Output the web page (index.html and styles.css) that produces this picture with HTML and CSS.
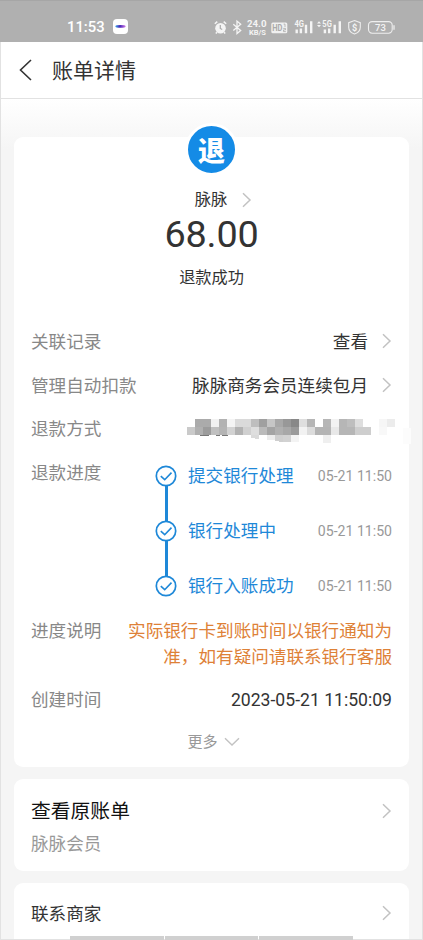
FILE: index.html
```
<!DOCTYPE html>
<html lang="zh-CN">
<head>
  <meta charset="UTF-8">
  <meta name="viewport" content="width=device-width, initial-scale=1.0">
  <title>账单详情</title>
  <link rel="stylesheet" href="styles.css">
</head>
<body>
  <svg class="defs" width="0" height="0">
    <symbol id="chevron" viewBox="0 0 10 16"><path d="M1 1.2 8 8 1 14.8" fill="none" stroke="#c2c2c2" stroke-width="1.5"/></symbol>
    <symbol id="check" viewBox="0 0 22 22">
      <circle cx="11" cy="11" r="9.7" fill="#fff" stroke="#1e88d8" stroke-width="1.7"/>
      <path d="M5.8 11.2 9.7 14.7 16.5 7.6" fill="none" stroke="#1e88d8" stroke-width="1.6"/>
    </symbol>
  </svg>

  <div class="status-bar">
    <span class="clock">11:53</span>
    <svg class="app-icon" width="15" height="15" viewBox="0 0 15 15">
      <defs><linearGradient id="lens"><stop offset="0" stop-color="#35a5e8"/><stop offset=".45" stop-color="#4a25b8"/><stop offset="1" stop-color="#d07ae8"/></linearGradient></defs>
      <rect width="15" height="15" rx="4" fill="#fff"/>
      <ellipse cx="7.5" cy="7.4" rx="5.2" ry="1.4" fill="url(#lens)"/>
    </svg>
    <svg class="status-icons" width="184" height="20" viewBox="0 0 184 20">
      <!-- alarm -->
      <circle cx="6.5" cy="10.2" r="5.3" fill="#f4f4f4"/>
      <path d="M.8 5.8 3.3 3.6M12.2 5.8 9.7 3.6M3 14.2 1.8 15.6M10 14.2 11.2 15.6" stroke="#f4f4f4" stroke-width="1.5"/>
      <path d="M6.3 7V10.5L8.2 11.5" fill="none" stroke="#aaa" stroke-width="1.2"/>
      <!-- bluetooth -->
      <path d="M19.3 6.2 26.7 12.4 23 15.5V3.1L26.7 6.2 19.3 12.5" fill="none" stroke="#f4f4f4" stroke-width="1.3"/>
      <!-- network speed -->
      <text x="33" y="9.3" class="net-speed" textLength="19.5" lengthAdjust="spacingAndGlyphs">24.0</text>
      <text x="35" y="16.8" class="net-unit" textLength="17" lengthAdjust="spacingAndGlyphs">KB/S</text>
      <!-- hd voice -->
      <rect x="57.3" y="4.4" width="16" height="10.8" rx="1.5" fill="#f0f0f0"/>
      <text x="58.3" y="13" class="hd" textLength="10.2" lengthAdjust="spacingAndGlyphs">HD</text>
      <path d="M69.6 6.1H71V9M69.2 10.4H71.5V11.9H69.5V13.6H71.8" fill="none" stroke="#aaa" stroke-width=".8"/>
      <!-- signals -->
      <text x="80.5" y="9" class="gen" textLength="9.5" lengthAdjust="spacingAndGlyphs">4G</text>
      <path d="M82.7 11.5V15.3M86.9 10.5V15.3M92 6.8V15.3M97.2 3.2V15.3" stroke="#f4f4f4" stroke-width="2.4"/>
      <path d="M103 5.6 105 3.3 107 5.6ZM103 7 105 9.3 107 7Z" fill="#f4f4f4"/>
      <text x="108.3" y="9" class="gen" textLength="9.5" lengthAdjust="spacingAndGlyphs">5G</text>
      <path d="M110.9 11.5V15.3M115.2 10.5V15.3M120.7 6.8V15.3M125.8 3.2V15.3" stroke="#f4f4f4" stroke-width="2.4"/>
      <!-- payment shield -->
      <path d="M140.5 2.5 146.3 4.7V9.2C146.3 12.7 143.5 14.9 140.5 16 137.5 14.9 134.7 12.7 134.7 9.2V4.7Z" fill="none" stroke="#eee" stroke-width="1.1"/>
      <text x="137.9" y="12.6" class="dollar">$</text>
      <!-- battery -->
      <rect x="154.5" y="3.6" width="23.7" height="11.6" rx="3.6" fill="none" stroke="#eee" stroke-width="1.1"/>
      <path d="M180 7.2V11.7" stroke="#eee" stroke-width="1.3"/>
      <text x="161" y="13" class="battery" textLength="10.8" lengthAdjust="spacingAndGlyphs">73</text>
    </svg>
  </div>

  <header class="nav">
    <svg class="back" width="13" height="22" viewBox="0 0 13 22"><path d="M12 1 1.5 11 12 21" fill="none" stroke="#333" stroke-width="1.6"/></svg>
    <h1>账单详情</h1>
  </header>

  <main>
    <section class="card bill">
      <div class="avatar">退</div>
      <div class="merchant">脉脉<svg class="chevron"><use href="#chevron"/></svg></div>
      <div class="amount">68.00</div>
      <div class="state">退款成功</div>

      <div class="rows">
        <div class="row">
          <span class="label">关联记录</span>
          <span class="value">查看<svg class="chevron"><use href="#chevron"/></svg></span>
        </div>
        <div class="row">
          <span class="label">管理自动扣款</span>
          <span class="value">脉脉商务会员连续包月<svg class="chevron"><use href="#chevron"/></svg></span>
        </div>
        <div class="row">
          <span class="label">退款方式</span>
          <!-- masked account, 8px blocks -->
          <svg class="mask" width="224" height="28" viewBox="187 418 224 28" shape-rendering="crispEdges">
            <path d="M200 435h9v1h-9zM216 435h4v1h-4zM222 434h6v2h-6z" fill="#777"/>
            <g>
              <rect x="195" y="419" width="16" height="8" fill="#ababab"/>
              <rect x="211" y="419" width="8" height="8" fill="#f2f2f2"/>
              <rect x="219" y="419" width="8" height="8" fill="#b2b2b2"/>
              <rect x="227" y="419" width="8" height="8" fill="#f4f4f4"/>
              <rect x="235" y="419" width="16" height="8" fill="#dadada"/>
              <rect x="251" y="419" width="8" height="8" fill="#bebebe"/>
              <rect x="259" y="419" width="8" height="8" fill="#a0a0a0"/>
              <rect x="267" y="419" width="8" height="8" fill="#c6c6c6"/>
              <rect x="275" y="419" width="8" height="8" fill="#a8a8a8"/>
              <rect x="283" y="419" width="8" height="8" fill="#989898"/>
              <rect x="291" y="419" width="8" height="8" fill="#888"/>
              <rect x="299" y="419" width="8" height="8" fill="#dedede"/>
              <rect x="307" y="419" width="8" height="8" fill="#b6b6b6"/>
              <rect x="323" y="419" width="8" height="8" fill="#b6b6b6"/>
              <rect x="331" y="419" width="8" height="8" fill="#f2f2f2"/>
              <rect x="339" y="419" width="8" height="8" fill="#b6b6b6"/>
              <rect x="347" y="419" width="8" height="8" fill="#bebebe"/>
              <rect x="355" y="419" width="8" height="8" fill="#dedede"/>
              <rect x="379" y="419" width="8" height="8" fill="#f6f6f6"/>
              <rect x="387" y="419" width="8" height="8" fill="#ececec"/>
            </g>
            <g>
              <rect x="187" y="427" width="8" height="8" fill="#cacaca"/>
              <rect x="195" y="427" width="8" height="8" fill="#b0b0b0"/>
              <rect x="203" y="427" width="8" height="8" fill="#9c9c9c"/>
              <rect x="211" y="427" width="8" height="8" fill="#c0c0c0"/>
              <rect x="219" y="427" width="8" height="8" fill="#b4b4b4"/>
              <rect x="227" y="427" width="8" height="8" fill="#d2d2d2"/>
              <rect x="235" y="427" width="8" height="8" fill="#b2b2b2"/>
              <rect x="243" y="427" width="8" height="8" fill="#d0d0d0"/>
              <rect x="251" y="427" width="8" height="8" fill="#dedede"/>
              <rect x="259" y="427" width="8" height="8" fill="#bababa"/>
              <rect x="267" y="427" width="8" height="8" fill="#a4a4a4"/>
              <rect x="275" y="427" width="8" height="8" fill="#b0b0b0"/>
              <rect x="283" y="427" width="8" height="8" fill="#a8a8a8"/>
              <rect x="291" y="427" width="8" height="8" fill="#9a9a9a"/>
              <rect x="299" y="427" width="8" height="8" fill="#f2f2f2"/>
              <rect x="307" y="427" width="8" height="8" fill="#dcdcdc"/>
              <rect x="315" y="427" width="16" height="8" fill="#b4b4b4"/>
              <rect x="331" y="427" width="8" height="8" fill="#e8e8e8"/>
              <rect x="339" y="427" width="16" height="8" fill="#b6b6b6"/>
              <rect x="355" y="427" width="16" height="8" fill="#cecece"/>
              <rect x="379" y="427" width="8" height="8" fill="#f8f8f8"/>
            </g>
            <g>
              <path d="M251 435h8v4l-8-1z" fill="#dadada"/>
              <rect x="267" y="435" width="8" height="5" fill="#ececec"/>
              <path d="M275 435h8v7l-8-1z" fill="#cfcfcf"/>
              <rect x="283" y="435" width="8" height="7" fill="#d2d2d2"/>
              <rect x="291" y="435" width="8" height="7" fill="#f3f3f3"/>
              <rect x="323" y="435" width="8" height="8" fill="#efefef"/>
            </g>
            <path d="M403 428h8v16h-8z" fill="#fcfcfc"/>
          </svg>
        </div>
        <div class="row progress-row">
          <span class="label">退款进度</span>
          <ol class="steps">
            <li><svg class="check"><use href="#check"/></svg><span>提交银行处理</span><time>05-21 11:50</time></li>
            <li><svg class="check"><use href="#check"/></svg><span>银行处理中</span><time>05-21 11:50</time></li>
            <li><svg class="check"><use href="#check"/></svg><span>银行入账成功</span><time>05-21 11:50</time></li>
          </ol>
        </div>
        <div class="row">
          <span class="label">进度说明</span>
          <span class="value notice">实际银行卡到账时间以银行通知为<br>准，如有疑问请联系银行客服</span>
        </div>
        <div class="row">
          <span class="label">创建时间</span>
          <span class="value">2023-05-21 11:50:09</span>
        </div>
      </div>
      <div class="more">更多<svg width="16" height="10" viewBox="0 0 16 10"><path d="M1 1.2 8 8 15 1.2" fill="none" stroke="#c2c2c2" stroke-width="1.4"/></svg></div>
    </section>

    <section class="card link-card original">
      <div>
        <h2>查看原账单</h2>
        <p>脉脉会员</p>
      </div>
      <svg class="chevron"><use href="#chevron"/></svg>
    </section>

    <section class="card link-card contact">
      <span>联系商家</span>
      <svg class="chevron"><use href="#chevron"/></svg>
    </section>
  </main>

  <div class="gesture-bar"><i></i><i></i><i></i></div>
</body>
</html>
```
FILE: styles.css
```
* {
  box-sizing: border-box;
}
body {
  position: relative;
  display: flex;
  flex-direction: column;
  width: 423px;
  height: 940px;
  margin: 0;
  overflow: hidden;
  background: #f5f5f5;
  color: #333;
  font-family: Roboto, "Noto Sans CJK SC", sans-serif;
  font-size: 17.6px;
  line-height: 26px;
}
body::after {
  content: "";
  position: absolute;
  top: 42px;
  right: 0;
  bottom: 0;
  left: 0;
  border: solid #e2e2e2;
  border-width: 0 1px 1px;
}
svg {
  display: block;
  flex: none;
}
.defs {
  position: absolute;
}
.status-bar {
  display: flex;
  flex: none;
  align-items: center;
  height: 42px;
  padding: 12px 0 0 67px;
  background: #b0b0b0;
  border-top: 1px solid #a6a6a6;
}
.clock {
  width: 46px;
  margin-top: -1px;
  color: #fff;
  font-size: 14.8px;
  font-weight: 500;
}
.app-icon {
  margin-top: -2px;
}
.status-icons {
  margin-left: 86px;
  font-family: Roboto, sans-serif;
  font-weight: 700;
  fill: #f4f4f4;
}
.net-speed {
  font-size: 8.8px;
}
.net-unit {
  font-size: 7px;
}
.hd {
  font-size: 9px;
  fill: #aaa;
}
.gen {
  font-size: 8.3px;
}
.dollar {
  font-size: 9px;
}
.battery {
  font-size: 9.8px;
  font-weight: 500;
}
.nav {
  display: flex;
  flex: none;
  align-items: center;
  gap: 20px;
  height: 57px;
  padding-left: 19px;
  background: #fff;
  border-bottom: 1px solid #e2e2e2;
}
.nav h1 {
  margin: 1px 0 0;
  font-size: 21px;
  font-weight: 400;
}
main {
  display: flex;
  flex: 1;
  flex-direction: column;
  gap: 12px;
  padding: 38px 14px 0;
  background: linear-gradient(#fff, #f5f5f5 50px);
}
.card {
  flex: none;
  background: #fff;
  border-radius: 9px;
}
.bill {
  display: flex;
  flex-direction: column;
  align-items: center;
  height: 630px;
}
.avatar {
  width: 53px;
  height: 53px;
  margin-top: -14px;
  border: 3px solid #fff;
  border-radius: 50%;
  background: #148be6;
  color: #fff;
  font-size: 27px;
  font-weight: 900;
  line-height: 52px;
  text-align: center;
}
.merchant {
  display: flex;
  align-items: center;
  gap: 15px;
  margin-top: 11px;
  padding-left: 24px;
  font-size: 16.3px;
}
.chevron {
  width: 10px;
  height: 16px;
}
.amount {
  margin-top: -1px;
  font-size: 37.8px;
  letter-spacing: -0.2px;
  line-height: 44px;
}
.state {
  margin-top: 9px;
  font-size: 16.2px;
}
.rows {
  display: flex;
  flex-direction: column;
  align-self: stretch;
  gap: 17.5px;
  margin-top: 38px;
  padding: 0 17px;
}
.row {
  display: flex;
  justify-content: space-between;
}
.label {
  color: #888;
}
.value {
  display: flex;
  align-items: center;
  gap: 14px;
  text-align: right;
}
.value .chevron {
  margin-top: -2px;
}
.mask {
  margin: 2px -19px -4px 0;
}
.progress-row {
  height: 140.5px;
}
.steps {
  width: 238px;
  margin: 3px 0 0;
  padding: 0;
  list-style: none;
}
.steps li {
  position: relative;
  display: flex;
  align-items: center;
  height: 26px;
  margin-bottom: 29.4px;
  color: #1e88d8;
}
/* connector between two steps */
.steps li:not(:last-child)::before {
  content: "";
  position: absolute;
  top: 23px;
  left: 10.5px;
  width: 3px;
  height: 35px;
  background: #1e88d8;
}
.check {
  width: 22px;
  height: 22px;
  margin: 0 11px 0 1px;
}
.steps time {
  margin-left: auto;
  color: #999;
  font-size: 14.1px;
}
.notice {
  color: #de8137;
}
.more {
  display: flex;
  align-items: center;
  gap: 6px;
  margin-top: 16px;
  padding-left: 4px;
  color: #999;
  font-size: 15px;
}
.link-card {
  display: flex;
  justify-content: space-between;
  padding: 18px 17px 0;
}
.original {
  height: 92px;
}
.original .chevron {
  margin-top: 6px;
}
.original h2 {
  margin: 1px 0 0;
  color: #111;
  font-size: 19.8px;
  font-weight: 400;
  line-height: 28px;
}
.original p {
  margin: 5px 0 0;
  color: #999;
}
.contact {
  height: 80px;
}
.contact .chevron {
  margin-top: 4px;
}
.gesture-bar {
  position: absolute;
  bottom: 0;
  left: 70px;
  z-index: 1;
  display: flex;
  gap: 1px;
  width: 283px;
  height: 4px;
}
.gesture-bar i {
  flex: 1;
  background: #d0d0d0;
}
```
